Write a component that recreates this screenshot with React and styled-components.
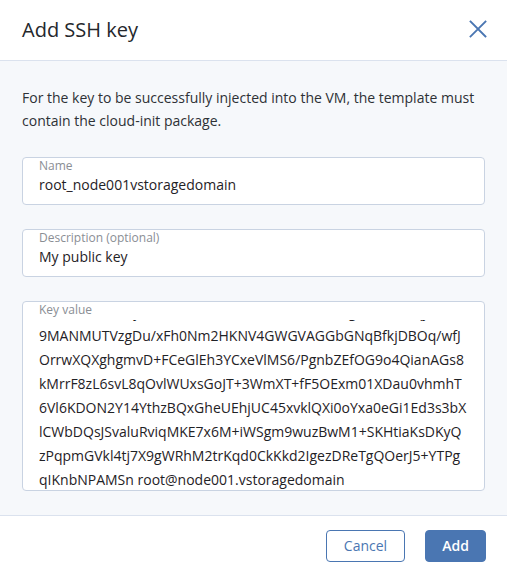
import React from "react";
import styled, { createGlobalStyle } from "styled-components";

const GlobalStyle = createGlobalStyle`
  html, body {
    margin: 0;
    padding: 0;
    background: #fff;
  }
  body {
    font-family: "Open Sans", "Noto Sans", sans-serif;
    color: #24272c;
  }
`;

const keyLines = [
  "AAAAB3NzaC1yc2EAAAADAQABAAABAQC5XzT7gHNw0KUqjRdEAMyj/W",
  "9MANMUTVzgDu/xFh0Nm2HKNV4GWGVAGGbGNqBfkjDBOq/wfJ",
  "OrrwXQXghgmvD+FCeGlEh3YCxeVlMS6/PgnbZEfOG9o4QianAGs8",
  "kMrrF8zL6svL8qOvlWUxsGoJT+3WmXT+fF5OExm01XDau0vhmhT",
  "6Vl6KDON2Y14YthzBQxGheUEhjUC45xvklQXi0oYxa0eGi1Ed3s3bX",
  "lCWbDQsJSvaluRviqMKE7x6M+iWSgm9wuzBwM1+SKHtiaKsDKyQ",
  "zPqpmGVkl4tj7X9gWRhM2trKqd0CkKkd2IgezDReTgQOerJ5+YTPg",
  "qIKnbNPAMSn root@node001.vstoragedomain",
];

const App = () => {
  return (
    <>
      <GlobalStyle />
      <Dialog>
        <Header>
          <Title>Add SSH key</Title>
          <CloseButton aria-label="Close">
            <svg width="18" height="18" viewBox="0 0 18 18">
              <path
                d="M1.5 1.5 L16.5 16.5 M16.5 1.5 L1.5 16.5"
                stroke="#4a76b2"
                strokeWidth="1.8"
                strokeLinecap="square"
              />
            </svg>
          </CloseButton>
        </Header>
        <Body>
          <Note>
            For the key to be successfully injected into the VM, the template
            must contain the cloud-init package.
          </Note>
          <Field>
            <Label>Name</Label>
            <Value>root_node001vstoragedomain</Value>
          </Field>
          <Field>
            <Label>Description (optional)</Label>
            <Value>My public key</Value>
          </Field>
          <KeyField>
            <Label>Key value</Label>
            <KeyViewport>
              <KeyText>
                {keyLines.map((line, i) => (
                  <KeyLine key={i}>{line}</KeyLine>
                ))}
              </KeyText>
            </KeyViewport>
          </KeyField>
        </Body>
        <Footer>
          <Button>Cancel</Button>
          <Button $primary>Add</Button>
        </Footer>
      </Dialog>
    </>
  );
};

export default App;

const Dialog = styled.div`
  width: 507px;
  height: 575px;
  display: flex;
  flex-direction: column;
  background: #fff;
`;

const Header = styled.div`
  height: 61px;
  flex-shrink: 0;
  display: flex;
  align-items: center;
  justify-content: space-between;
  padding: 0 20px 0 22px;
  border-bottom: 1px solid #dbe2ee;
  box-sizing: border-box;
`;

const Title = styled.div`
  font-size: 20px;
  color: #24272c;
  margin-top: -1px;
`;

const CloseButton = styled.button`
  background: none;
  border: none;
  padding: 0;
  width: 18px;
  height: 18px;
  display: flex;
  cursor: pointer;
  margin-top: -2px;
`;

const Body = styled.div`
  flex: 1;
  background: #f6f8fb;
  padding: 25px 22px 24px 22px;
  display: flex;
  flex-direction: column;
  gap: 24px;
  border-bottom: 1px solid #dbe2ee;
`;

const Note = styled.p`
  margin: 0 0 1px;
  font-size: 14px;
  line-height: 23px;
  color: #2e3136;
`;

const Field = styled.div`
  height: 48px;
  flex-shrink: 0;
  box-sizing: border-box;
  background: #fff;
  border: 1px solid #c9d3e2;
  border-radius: 4px;
  padding: 0 16px;
  display: flex;
  flex-direction: column;
`;

const Label = styled.div`
  font-size: 12px;
  line-height: 16px;
  color: #8a8e94;
`;

const Value = styled.div`
  font-size: 14px;
  line-height: 22px;
  color: #1f2226;
`;

const KeyField = styled(Field)`
  height: 190px;
`;

const KeyViewport = styled.div`
  flex: 1;
  margin-top: 2px;
  overflow: hidden;
`;

const KeyText = styled.div`
  margin-top: -20px;
`;

const KeyLine = styled.div`
  font-size: 14px;
  line-height: 24px;
  color: #1f2226;
  white-space: nowrap;
`;

const Footer = styled.div`
  height: 59px;
  flex-shrink: 0;
  display: flex;
  align-items: center;
  justify-content: flex-end;
  gap: 20px;
  padding: 0 21px 0 0;
  box-sizing: border-box;
`;

const Button = styled.button`
  height: 32px;
  min-width: ${(p) => (p.$primary ? "61px" : "79px")};
  padding: 0 16px;
  border-radius: 4px;
  font-family: "Open Sans", "Noto Sans", sans-serif;
  font-size: 14px;
  font-weight: ${(p) => (p.$primary ? 600 : 400)};
  color: ${(p) => (p.$primary ? "#fff" : "#4a76b2")};
  background: ${(p) => (p.$primary ? "#4a76b2" : "#fff")};
  border: 1px solid #4a76b2;
  cursor: pointer;
`;
